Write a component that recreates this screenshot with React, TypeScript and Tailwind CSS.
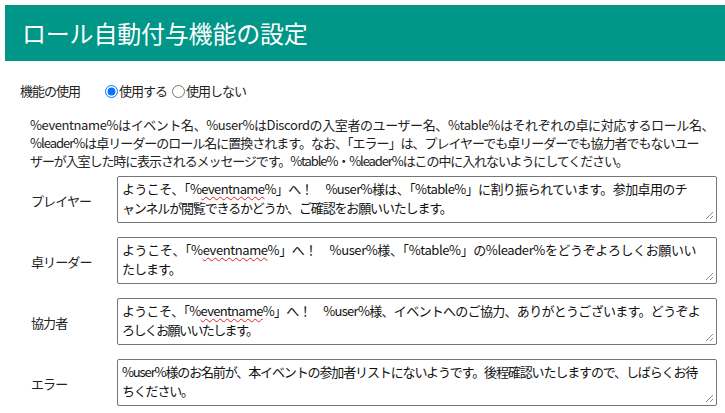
import React from "react";

const font = { fontFamily: '"Noto Sans CJK JP", "Noto Sans", sans-serif' };

function Grip() {
  return (
    <svg className="absolute right-[2px] bottom-[2px]" width="9" height="9" viewBox="0 0 9 9">
      <line x1="8" y1="1" x2="1" y2="8" stroke="#8a8a8a" strokeWidth="1" />
      <line x1="8" y1="5" x2="5" y2="8" stroke="#8a8a8a" strokeWidth="1" />
    </svg>
  );
}

function Wavy({ children }: { children: React.ReactNode }) {
  return (
    <span className="underline decoration-wavy decoration-[#e02020] decoration-1 underline-offset-[2px]">
      {children}
    </span>
  );
}

type Line = { text: React.ReactNode; cls: string };

function Row({ label, lines }: { label: string; lines: Line[] }) {
  return (
    <div className="flex items-center">
      <div className="w-[117px] shrink-0 pl-[31px] pt-[3px] text-[13px] text-[#222] leading-[18px] tracking-[-0.9px]">
        {label}
      </div>
      <div
        role="textbox"
        className="relative shrink-0 w-[600px] h-[47px] border border-[#767676] rounded-[2px] pl-[4px] pt-[2px] text-[13px] leading-[19px] text-[#111] overflow-hidden bg-white"
      >
        {lines.map((l, i) => (
          <div key={i} className={"whitespace-pre " + l.cls}>
            {l.text}
          </div>
        ))}
        <Grip />
      </div>
    </div>
  );
}

export default function App() {
  const welcome = (
    <>
      ようこそ、「%<Wavy>eventname</Wavy>%」へ！　%user%様
    </>
  );
  return (
    <div className="w-[725px] h-[413px] bg-white overflow-hidden" style={font}>
      <div className="ml-[5px] mt-[5px] h-[56px] bg-[#009688] flex items-center pl-[17px]">
        <h1 className="text-white text-[24px] font-normal leading-none tracking-[-0.2px]">ロール自動付与機能の設定</h1>
      </div>
      <div className="flex items-center mt-[20px] pl-[20px] h-[20px] text-[13px] text-[#222] tracking-[-1px]">
        <span className="w-[85px] shrink-0">機能の使用</span>
        <label className="flex items-center">
          <input type="radio" name="use" defaultChecked className="m-0 w-[13px] h-[13px]" />
          <span className="ml-[1px]">使用する</span>
        </label>
        <label className="flex items-center ml-[5px]">
          <input type="radio" name="use" className="m-0 w-[13px] h-[13px]" />
          <span className="ml-[1px]">使用しない</span>
        </label>
      </div>
      <div className="mt-[15px] pl-[30px] text-[13px] leading-[18px] text-[#222] whitespace-pre">
        <div className="tracking-[-0.4px]">
          %eventname%はイベント名、%user%はDiscordの入室者のユーザー名、%table%はそれぞれの卓に対応するロール名、
        </div>
        <div className="tracking-[-1px]">
          %leader%は卓リーダーのロール名に置換されます。なお、「エラー」は、プレイヤーでも卓リーダーでも協力者でもないユー
        </div>
        <div className="tracking-[-1.1px]">
          ザーが入室した時に表示されるメッセージです。%table%・%leader%はこの中に入れないようにしてください。
        </div>
      </div>
      <div className="mt-[6px] flex flex-col gap-[14px]">
        <Row
          label="プレイヤー"
          lines={[
            { text: <>{welcome}は、「%table%」に割り振られています。参加卓用のチ</>, cls: "tracking-[-0.6px]" },
            { text: "ャンネルが閲覧できるかどうか、ご確認をお願いいたします。", cls: "tracking-[-1.15px]" },
          ]}
        />
        <Row
          label="卓リーダー"
          lines={[
            { text: <>{welcome}、「%table%」の%leader%をどうぞよろしくお願いい</>, cls: "tracking-[-0.4px]" },
            { text: "たします。", cls: "tracking-[-1px]" },
          ]}
        />
        <Row
          label="協力者"
          lines={[
            { text: <>{welcome}、イベントへのご協力、ありがとうございます。どうぞよ</>, cls: "tracking-[-0.7px]" },
            { text: "ろしくお願いいたします。", cls: "tracking-[-1.6px]" },
          ]}
        />
        <Row
          label="エラー"
          lines={[
            {
              text: "%user%様のお名前が、本イベントの参加者リストにないようです。後程確認いたしますので、しばらくお待",
              cls: "tracking-[-1.13px]",
            },
            { text: "ちください。", cls: "tracking-[-1.2px]" },
          ]}
        />
      </div>
    </div>
  );
}
